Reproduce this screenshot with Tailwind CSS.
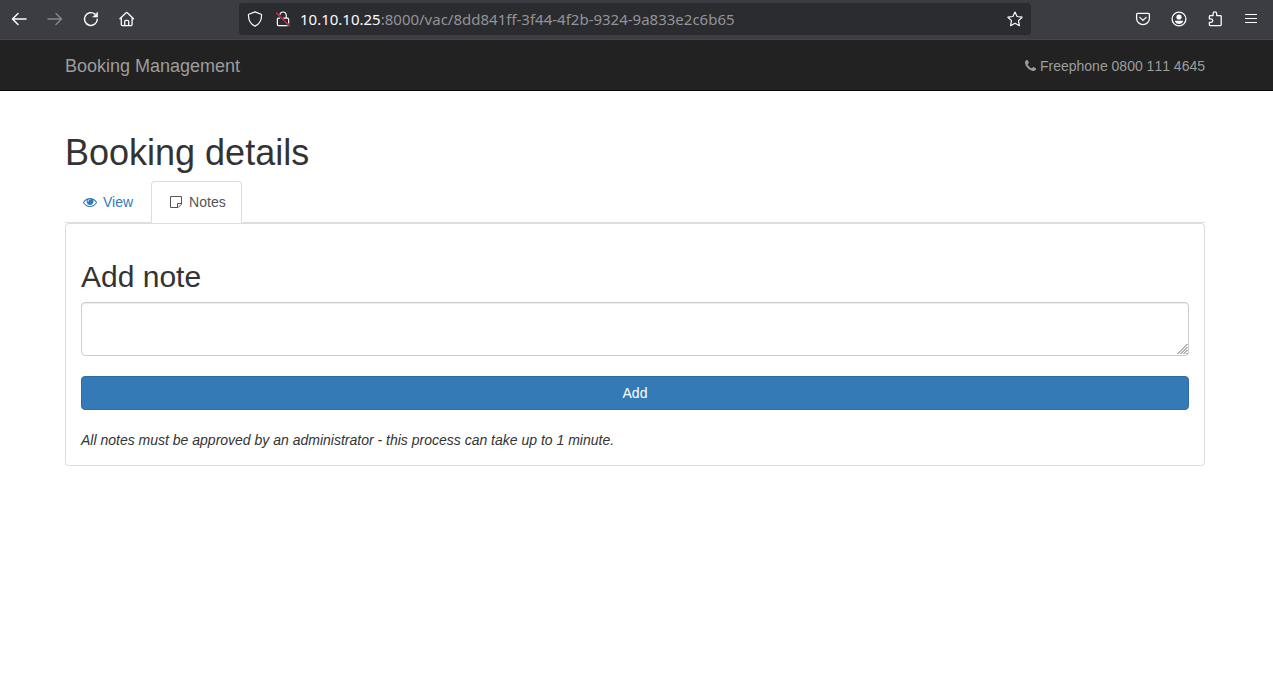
<!DOCTYPE html>
<html lang="en">
<head>
    <meta charset="UTF-8">
    <meta name="viewport" content="width=device-width, initial-scale=1.0">
    <title>Booking Management</title>
    <script src="https://cdn.jsdelivr.net/npm/@tailwindcss/browser@4"></script>
</head>
<body class="bg-white text-[#333333] text-sm leading-5 font-['Liberation_Sans',Arial,sans-serif]">

    <!-- Browser toolbar -->
    <div class="flex items-center h-10 pl-[11px] pr-[14px] pb-px bg-[#3c3d43] border-b border-[#45464c] text-[#fbfbfe]">
        <div class="flex items-center gap-5">
            <button type="button" aria-label="Back">
                <svg class="size-4" viewBox="0 0 16 16" fill="none" stroke="currentColor" stroke-width="1.5" stroke-linecap="round" stroke-linejoin="round"><path d="M15 8H1.8M7 2.5L1.5 8L7 13.5"/></svg>
            </button>
            <button type="button" aria-label="Forward" class="text-[#85868a]" disabled>
                <svg class="size-4" viewBox="0 0 16 16" fill="none" stroke="currentColor" stroke-width="1.5" stroke-linecap="round" stroke-linejoin="round"><path d="M1 8H14.2M9 2.5L14.5 8L9 13.5"/></svg>
            </button>
            <button type="button" aria-label="Reload">
                <svg class="size-4" viewBox="0 0 16 16" fill="none" stroke="currentColor" stroke-width="1.4" stroke-linecap="round"><path d="M14.3 8.3A6.4 6.4 0 1 1 12 3.1"/><path d="M14.6 1.4V6H10z" fill="currentColor" stroke-width=".6" stroke-linejoin="round"/></svg>
            </button>
            <button type="button" aria-label="Home">
                <svg class="size-4" viewBox="0 0 16 16" fill="none" stroke="currentColor" stroke-width="1.3" stroke-linecap="round" stroke-linejoin="round"><path d="M.9 7.8L7.1 1.7Q7.7 1.2 8.3 1.7L14.5 7.8M2.3 6.8V13.6Q2.3 14.6 3.3 14.6H12.1Q13.1 14.6 13.1 13.6V6.8M5.7 14.4V10.5Q5.7 9.3 6.9 9.3H8.5Q9.7 9.3 9.7 10.5V14.4"/></svg>
            </button>
        </div>

        <div class="flex flex-1 items-center h-8 ml-26 mr-26 px-2 rounded bg-[#2b2c30]">
            <svg class="size-4 shrink-0 mr-3" viewBox="0 0 16 16" fill="none" stroke="currentColor" stroke-width="1.2" stroke-linejoin="round"><path d="M8 .9L14.1 3.2Q14.6 3.4 14.6 4C14.6 9 12.7 13 8 15.1C3.3 13 1.4 9 1.4 4Q1.4 3.4 1.9 3.2z"/></svg>
            <svg class="size-4 shrink-0 mr-[9px]" viewBox="0 0 16 16" fill="none" stroke-linecap="round">
                <path d="M4.8 7V4.2A3.2 3.2 0 0 1 11.2 4.2V7M4.8 7.2H3.4Q2.4 7.2 2.4 8.2V13.6Q2.4 14.6 3.4 14.6H12.6Q13.6 14.6 13.6 13.6V8.2Q13.6 7.2 12.6 7.2H8.5" stroke="#fbfbfe" stroke-width="1.2"/>
                <path d="M1.5 2L14.5 15" stroke="#2b2c30" stroke-width="2.4"/>
                <path d="M1.5 2L14.5 15" stroke="#e22850" stroke-width="1.2"/>
            </svg>
            <label for="address" class="font-['Noto_Sans',sans-serif] text-[15px]">10.10.10.25</label>
            <input id="address" type="text" value=":8000/vac/8dd841ff-3f44-4f2b-9324-9a833e2c6b65" class="flex-1 min-w-0 bg-transparent outline-none text-[#939397] font-['Noto_Sans',sans-serif] text-[15px]">
            <button type="button" aria-label="Bookmark this page">
                <svg class="size-4" viewBox="0 0 16 16" fill="none" stroke="currentColor" stroke-width="1.2" stroke-linejoin="round"><path d="M8 1L10.1 5.5L15.1 6.2L11.5 9.6L12.4 14.7L8 12.2L3.6 14.7L4.5 9.6L.9 6.2L5.9 5.5z"/></svg>
            </button>
        </div>

        <div class="flex items-center gap-5">
            <button type="button" aria-label="Save to Pocket">
                <svg class="size-4" viewBox="0 0 16 16" fill="none" stroke="currentColor" stroke-width="1.3" stroke-linecap="round" stroke-linejoin="round"><path d="M2.6 2.4H13.4Q14.4 2.4 14.4 3.4V7.4A6.4 6.2 0 0 1 1.6 7.4V3.4Q1.6 2.4 2.6 2.4zM4.9 6.4L8 9.4L11.1 6.4"/></svg>
            </button>
            <button type="button" aria-label="Account">
                <svg class="size-4" viewBox="0 0 16 16" fill="currentColor"><circle cx="8" cy="8" r="6.9" fill="none" stroke="currentColor" stroke-width="1.3"/><circle cx="8" cy="6" r="2.6"/><path d="M4.4 9.7H11.6Q12.2 9.7 12 10.4Q10.8 12.9 8 12.9T4 10.4Q3.8 9.7 4.4 9.7z"/></svg>
            </button>
            <button type="button" aria-label="Extensions">
                <svg class="size-4" viewBox="0 0 16 16" fill="none" stroke="currentColor" stroke-width="1.3" stroke-linejoin="round"><path d="M6.1 4.6V2.7A1.8 1.8 0 0 1 9.7 2.7V4.6H13.4Q14.2 4.6 14.2 5.4V13.8Q14.2 14.6 13.4 14.6H3.2Q2.4 14.6 2.4 13.8V11.3H4A1.7 1.7 0 0 0 4 7.9H2.4V5.4Q2.4 4.6 3.2 4.6z"/></svg>
            </button>
            <button type="button" aria-label="Open menu">
                <svg class="size-4" viewBox="0 0 16 16" fill="none" stroke="currentColor" stroke-width="1.2" stroke-linecap="round"><path d="M2.5 3.5H13.5M2.5 7.5H13.5M2.5 11.5H13.5"/></svg>
            </button>
        </div>
    </div>

    <nav class="bg-[#222222] border-b border-[#080808] pl-[15px] pr-[18px] text-[#9d9d9d]">
        <div class="flex items-center justify-between h-[50px] pt-0.5 max-w-[1140px] mx-auto">
            <a href="#" class="text-lg leading-5">Booking Management</a>
            <p class="flex items-center gap-1 [font-kerning:none]">
                <svg class="w-[11px] h-[14px]" viewBox="192 0 1408 1792" fill="currentColor"><path d="M1600 1240q0 27-10 70.5t-21 68.5q-21 50-122 106-94 51-186 51-27 0-53-3.5t-57.5-12.5-47-14.5-55.5-20.5-49-18q-98-35-175-83-127-79-264-216t-216-264q-48-77-83-175-3-9-18-49t-20.5-55.5-14.5-47-12.5-57.5-3.5-53q0-92 51-186 56-101 106-122 25-11 68.5-21t70.5-10q14 0 21 3 18 6 53 76 11 19 30 54t35 63.5 31 53.5q3 4 17.5 25t21.5 35.5 7 28.5q0 20-28.5 50t-62 55-62 53-28.5 46q0 9 5 22.5t8.5 20.5 14 24 11.5 19q76 137 174 235t235 174q2 1 19 11.5t24 14 20.5 8.5 22.5 5q18 0 46-28.5t53-62 55-62 50-28.5q14 0 28.5 7t35.5 21.5 25 17.5q25 15 53.5 31t63.5 35 54 30q70 35 76 53 3 7 3 21z"/></svg>
                Freephone 0800 111 4645
            </p>
        </div>
    </nav>

    <main class="pl-[15px] pr-[18px] pt-[42px]">
        <div class="max-w-[1140px] mx-auto">
            <h1 class="text-4xl leading-10 font-medium mb-2">Booking details</h1>

            <ul class="flex gap-0.5 border-b border-[#dddddd]">
                <li>
                    <a href="#" class="flex items-center gap-1 -mb-px px-[15px] py-2.5 border border-transparent text-[#337ab7]">
                        <svg class="w-[18px] h-[14px]" viewBox="0 0 1792 1792" fill="currentColor"><path d="M1664 960q-152-236-381-353 61 104 61 225 0 185-131.5 316.5t-316.5 131.5-316.5-131.5-131.5-316.5q0-121 61-225-229 117-381 353 133 205 333.5 326.5t434.5 121.5 434.5-121.5 333.5-326.5zm-720-384q0-20-14-34t-34-14q-125 0-214.5 89.5t-89.5 214.5q0 20 14 34t34 14 34-14 14-34q0-86 61-147t147-61q20 0 34-14t14-34zm848 384q0 34-20 69-140 230-376.5 368.5t-499.5 138.5-499.5-139-376.5-368q-20-35-20-69t20-69q140-229 376.5-368t499.5-139 499.5 139 376.5 368q20 35 20 69z"/></svg>
                        View
                    </a>
                </li>
                <li>
                    <a href="#" class="flex items-center gap-1 -mb-px px-[15px] py-2.5 border border-[#dddddd] border-b-white rounded-t bg-white text-[#555555]">
                        <svg class="w-[18px] h-[14px]" viewBox="0 0 14 14" fill="none" stroke="currentColor" stroke-linejoin="round"><path d="M1.5 1.5H12.5V9.2L9.2 12.5H1.5zM12.5 8.5H8.5V12.5"/></svg>
                        Notes
                    </a>
                </li>
            </ul>

            <div class="p-[15px] border border-[#dddddd] rounded shadow-[0_1px_1px_rgba(0,0,0,0.05)]">
                <form>
                    <h2 class="pt-[21px] mb-2 text-3xl leading-[34px] font-medium"><label for="note">Add note</label></h2>
                    <div class="relative">
                        <textarea id="note" class="block w-full h-[54px] px-3 py-1.5 border border-[#cccccc] rounded resize-none shadow-[inset_0_1px_1px_rgba(0,0,0,0.075)] outline-none"></textarea>
                        <svg class="absolute right-px bottom-0.5 w-[11px] h-[10px] pointer-events-none" viewBox="0 0 11 10" fill="none" stroke="#666666"><path d="M.5 10L10.5 0M3.5 10L10.5 3M6.5 10L10.5 6M9.5 10L10.5 9"/></svg>
                    </div>
                    <button type="button" class="block w-full h-[34px] mt-5 mb-5 border border-[#2e6da4] rounded bg-[#337ab7] text-white">Add</button>
                </form>
                <p class="italic">All notes must be approved by an administrator - this process can take up to 1 minute.</p>
            </div>
        </div>
    </main>
</body>
</html>
